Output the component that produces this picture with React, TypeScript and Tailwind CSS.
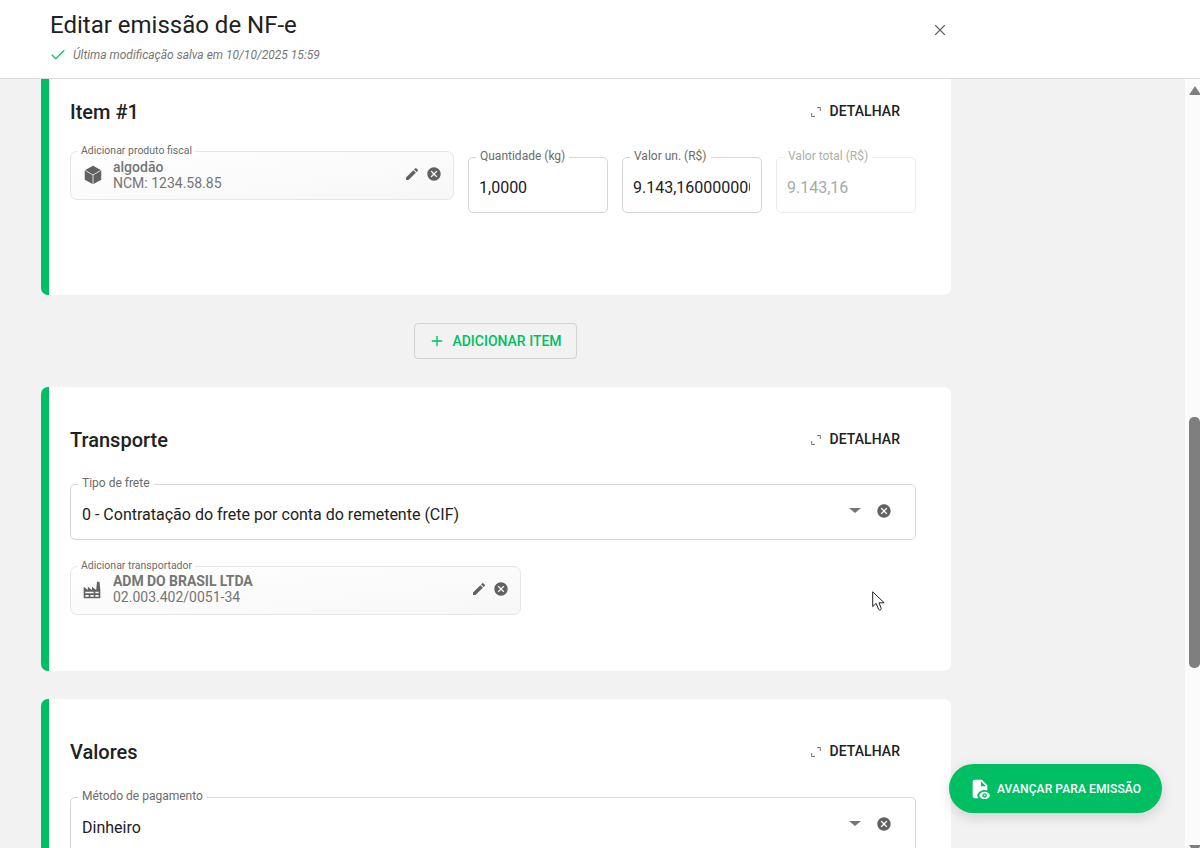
import { Check, Plus, X } from 'lucide-react';

const GREEN = 'border-l-[#00bf63]';

function CloseCircle() {
  return (
    <svg width="16" height="16" viewBox="0 0 24 24" fill="#616161">
      <path d="M12 2C6.47 2 2 6.47 2 12s4.47 10 10 10 10-4.47 10-10S17.53 2 12 2zm5 13.59L15.59 17 12 13.41 8.41 17 7 15.59 10.59 12 7 8.41 8.41 7 12 10.59 15.59 7 17 8.41 13.41 12 17 15.59z" />
    </svg>
  );
}

function EditIcon() {
  return (
    <svg width="16" height="16" viewBox="0 0 24 24" fill="#616161">
      <path d="M3 17.25V21h3.75L17.81 9.94l-3.75-3.75L3 17.25zM20.71 7.04a1 1 0 0 0 0-1.41l-2.34-2.34a1 1 0 0 0-1.41 0l-1.83 1.83 3.75 3.75 1.83-1.83z" />
    </svg>
  );
}

function DetailButton() {
  return (
    <div className="flex items-center gap-[9px] pr-[16px] text-[14px] font-medium tracking-[0.05px] text-[#212121]">
      <svg width="10" height="10" viewBox="0 0 10 10" fill="none" stroke="#8a8a8a" strokeWidth="1.1">
        <path d="M0.6 6V9.4H4M6 0.6H9.4V4" />
      </svg>
      <span className="mb-[1px]">DETALHAR</span>
    </div>
  );
}

function CardHeader({ title }: { title: string }) {
  return (
    <div className="flex items-center justify-between">
      <h2 className="text-[20px] leading-[24px] font-medium text-[#212121]">{title}</h2>
      <DetailButton />
    </div>
  );
}

function NumberField({ label, value, disabled }: { label: string; value: string; disabled?: boolean }) {
  return (
    <div className={`relative h-[56px] w-[140px] rounded-[5px] border ${disabled ? 'border-[#ececec]' : 'border-[#d6d6d6]'}`}>
      <span className={`absolute -top-[10px] left-[7px] bg-white px-[4px] text-[12px] leading-[16px] ${disabled ? 'text-[#a9b0a9]' : 'text-[#6b6b6b]'}`}>
        {label}
      </span>
      <div className={`ml-[10px] mr-[11px] h-full overflow-hidden whitespace-nowrap pt-[19px] text-[16px] leading-[22px] ${disabled ? 'text-[#a3aca6]' : 'text-[#212121]'}`}>
        {value}
      </div>
    </div>
  );
}

function SelectField({ label, value }: { label: string; value: string }) {
  return (
    <div className="relative flex h-[56px] w-full items-center rounded-[5px] border border-[#d6d6d6] pl-[11px] pr-[23px]">
      <span className="absolute -top-[10px] left-[7px] bg-white px-[4px] text-[12px] leading-[16px] text-[#6b6b6b]">
        {label}
      </span>
      <span className="mt-[6px] flex-1 text-[16px] text-[#212121]">{value}</span>
      <div className="mb-[3px] mr-[15px] h-0 w-0 border-x-[6px] border-t-[5px] border-x-transparent border-t-[#757575]" />
      <div className="mb-[3px]">
        <CloseCircle />
      </div>
    </div>
  );
}

function PickedField({
  label,
  title,
  subtitle,
  width,
  textOffset,
  icon,
  boldTitle,
}: {
  label: string;
  title: string;
  subtitle: string;
  width: string;
  textOffset: string;
  icon: React.ReactNode;
  boldTitle?: boolean;
}) {
  return (
    <div className={`relative flex h-[49px] items-center rounded-[7px] border border-[#e6e6e6] bg-gradient-to-br from-white to-[#f7f7f7] pl-[11px] pr-[11px] ${width}`}>
      <span className="absolute -top-[8px] left-[7px] bg-white px-[3px] text-[10.5px] leading-[14px] text-[#6b6b6b]">
        {label}
      </span>
      <div className="w-[31px] shrink-0">{icon}</div>
      <div className={`flex-1 text-[14px] leading-[16px] text-[#757575] ${textOffset}`}>
        <div className={boldTitle ? 'font-bold tracking-[-0.05px]' : 'font-medium'}>{title}</div>
        <div>{subtitle}</div>
      </div>
      <div className="mb-[3px] flex items-center gap-[6px]">
        <EditIcon />
        <CloseCircle />
      </div>
    </div>
  );
}

export default function App() {
  return (
    <div className="relative flex h-[848px] w-[1200px] flex-col overflow-hidden bg-[#f2f2f2] font-['Roboto',sans-serif]">
      {/* Header */}
      <header className="flex h-[79px] shrink-0 items-start justify-between border-b border-[#dcdcdc] bg-white pl-[50px] pr-[251px]">
        <div>
          <h1 className="mt-[10px] text-[24px] leading-[30px] text-[#212121]">Editar emissão de NF-e</h1>
          <div className="mt-[6px] flex items-center gap-[6px] -ml-[1px] text-[12px] italic leading-[18px] text-[#757575]">
            <Check size={18} color="#00bf63" strokeWidth={1.5} />
            <span>Última modificação salva em 10/10/2025 15:59</span>
          </div>
        </div>
        <X size={18} color="#616161" strokeWidth={1.5} className="mt-[21px]" />
      </header>

      <div className="flex min-h-0 flex-1">
        {/* Main Content */}
        <main className="w-[1185px] pl-[41px]">
          <div className="flex w-[910px] flex-col">
            <section className={`h-[216px] rounded-b-[7px] border-l-[8px] ${GREEN} bg-white pl-[21px] pr-[35px] pt-[21px]`}>
              <CardHeader title="Item #1" />
              <div className="mt-[27px] flex items-start gap-[14px]">
                <PickedField
                  label="Adicionar produto fiscal"
                  title="algodão"
                  subtitle="NCM: 1234.58.85"
                  width="w-[384px]"
                  textOffset="mb-[1px]"
                  icon={
                    <svg width="22" height="22" viewBox="0 0 24 24" fill="#616161" className="mb-[2px]">
                      <path d="M21,16.5C21,16.88 20.79,17.21 20.47,17.38L12.57,21.82C12.41,21.94 12.21,22 12,22C11.79,22 11.59,21.94 11.43,21.82L3.53,17.38C3.21,17.21 3,16.88 3,16.5V7.5C3,7.12 3.21,6.79 3.53,6.62L11.43,2.18C11.59,2.06 11.79,2 12,2C12.21,2 12.41,2.06 12.57,2.18L20.47,6.62C20.79,6.79 21,7.12 21,7.5V16.5Z" />
                      <path d="M3.5 7L12 12L20.5 7M12 12V22" fill="none" stroke="#f7f7f7" strokeWidth="0.9" />
                    </svg>
                  }
                />
                <div className="mt-[6px] flex gap-[14px]">
                  <NumberField label="Quantidade (kg)" value="1,0000" />
                  <NumberField label="Valor un. (R$)" value="9.143,160000000" />
                  <NumberField label="Valor total (R$)" value="9.143,16" disabled />
                </div>
              </div>
            </section>

            <div className="flex justify-center py-[28px]">
              <button className="mr-[1px] flex h-[36px] w-[163px] items-center justify-center gap-[7px] rounded-[4px] border border-[#d2d2d2] text-[14px] font-medium text-[#00bf63]">
                <Plus size={16} strokeWidth={2} />
                <span>ADICIONAR ITEM</span>
              </button>
            </div>

            <section className={`h-[284px] rounded-[7px] border-l-[8px] ${GREEN} bg-white pl-[21px] pr-[35px] pt-[41px]`}>
              <CardHeader title="Transporte" />
              <div className="mt-[32px]">
                <SelectField label="Tipo de frete" value="0 - Contratação do frete por conta do remetente (CIF)" />
              </div>
              <div className="mt-[26px]">
                <PickedField
                  label="Adicionar transportador"
                  title="ADM DO BRASIL LTDA"
                  subtitle="02.003.402/0051-34"
                  width="w-[451px]"
                  textOffset="mb-[3px]"
                  boldTitle
                  icon={
                    <svg width="20" height="20" viewBox="0 0 24 24" fill="#616161" fillRule="evenodd" className="mb-[1px]">
                      <path d="M4,18V20H8V18H4M4,14V16H14V14H4M10,18V20H14V18H10M16,14V16H20V14H16M16,18V20H20V18H16M2,22V8L7,12V8L12,12V8L17,12L18,2H21L22,12V22H2Z" />
                    </svg>
                  }
                />
              </div>
            </section>

            <section className={`mt-[28px] h-[300px] rounded-[7px] border-l-[8px] ${GREEN} bg-white pl-[21px] pr-[35px] pt-[41px]`}>
              <CardHeader title="Valores" />
              <div className="mt-[33px]">
                <SelectField label="Método de pagamento" value="Dinheiro" />
              </div>
            </section>
          </div>
        </main>

        {/* Scrollbar */}
        <div className="relative w-[15px] bg-[#fbfbfb]">
          <div className="absolute left-[4px] top-[7px] h-0 w-0 border-x-[6px] border-b-[9px] border-x-transparent border-b-[#7f7f7f]" />
          <div className="absolute left-[4px] top-[338px] h-[251px] w-[11px] rounded-[5px] bg-[#7f7f7f]" />
          <div className="absolute bottom-[-6px] left-[4px] h-0 w-0 border-x-[6px] border-t-[9px] border-x-transparent border-t-[#7f7f7f]" />
        </div>
      </div>

      {/* Floating action */}
      <button className="absolute left-[949px] top-[764px] flex h-[49px] w-[213px] items-center gap-[6px] rounded-full bg-[#00bf63] pl-[20px] text-[12px] font-medium tracking-[0.1px] text-white shadow-[0_4px_14px_rgba(0,0,0,0.14)]">
        <svg width="22" height="22" viewBox="0 0 24 24" fill="white">
          <path fillRule="evenodd" d="M14 2H6A2 2 0 0 0 4 4V20A2 2 0 0 0 6 22H10.5C9.7 21.2 9.1 20.2 8.8 19C9.9 15.5 13.2 13 17 13C18.4 13 19.3 13.2 20 13.5V8L14 2ZM13 9V3.5L18.5 9Z" />
          <path fillRule="evenodd" d="M17 15C14.27 15 11.94 16.66 11 19C11.94 21.34 14.27 23 17 23S22.06 21.34 23 19C22.06 16.66 19.73 15 17 15M17 21.5C15.62 21.5 14.5 20.38 14.5 19S15.62 16.5 17 16.5 19.5 17.62 19.5 19 18.38 21.5 17 21.5" />
          <circle cx="17" cy="19" r="1" />
        </svg>
        <span>AVANÇAR PARA EMISSÃO</span>
      </button>

      {/* Mouse cursor */}
      <svg className="absolute left-[872px] top-[591px]" width="14" height="21" viewBox="0 0 14 21" fill="white" stroke="#222" strokeWidth="1">
        <path d="M0.7 0.8V15.6L4.2 12.4L6.6 18.4C7.2 19.6 9.6 18.8 9.2 17.4L7 11.8H12.2Z" />
      </svg>
    </div>
  );
}
